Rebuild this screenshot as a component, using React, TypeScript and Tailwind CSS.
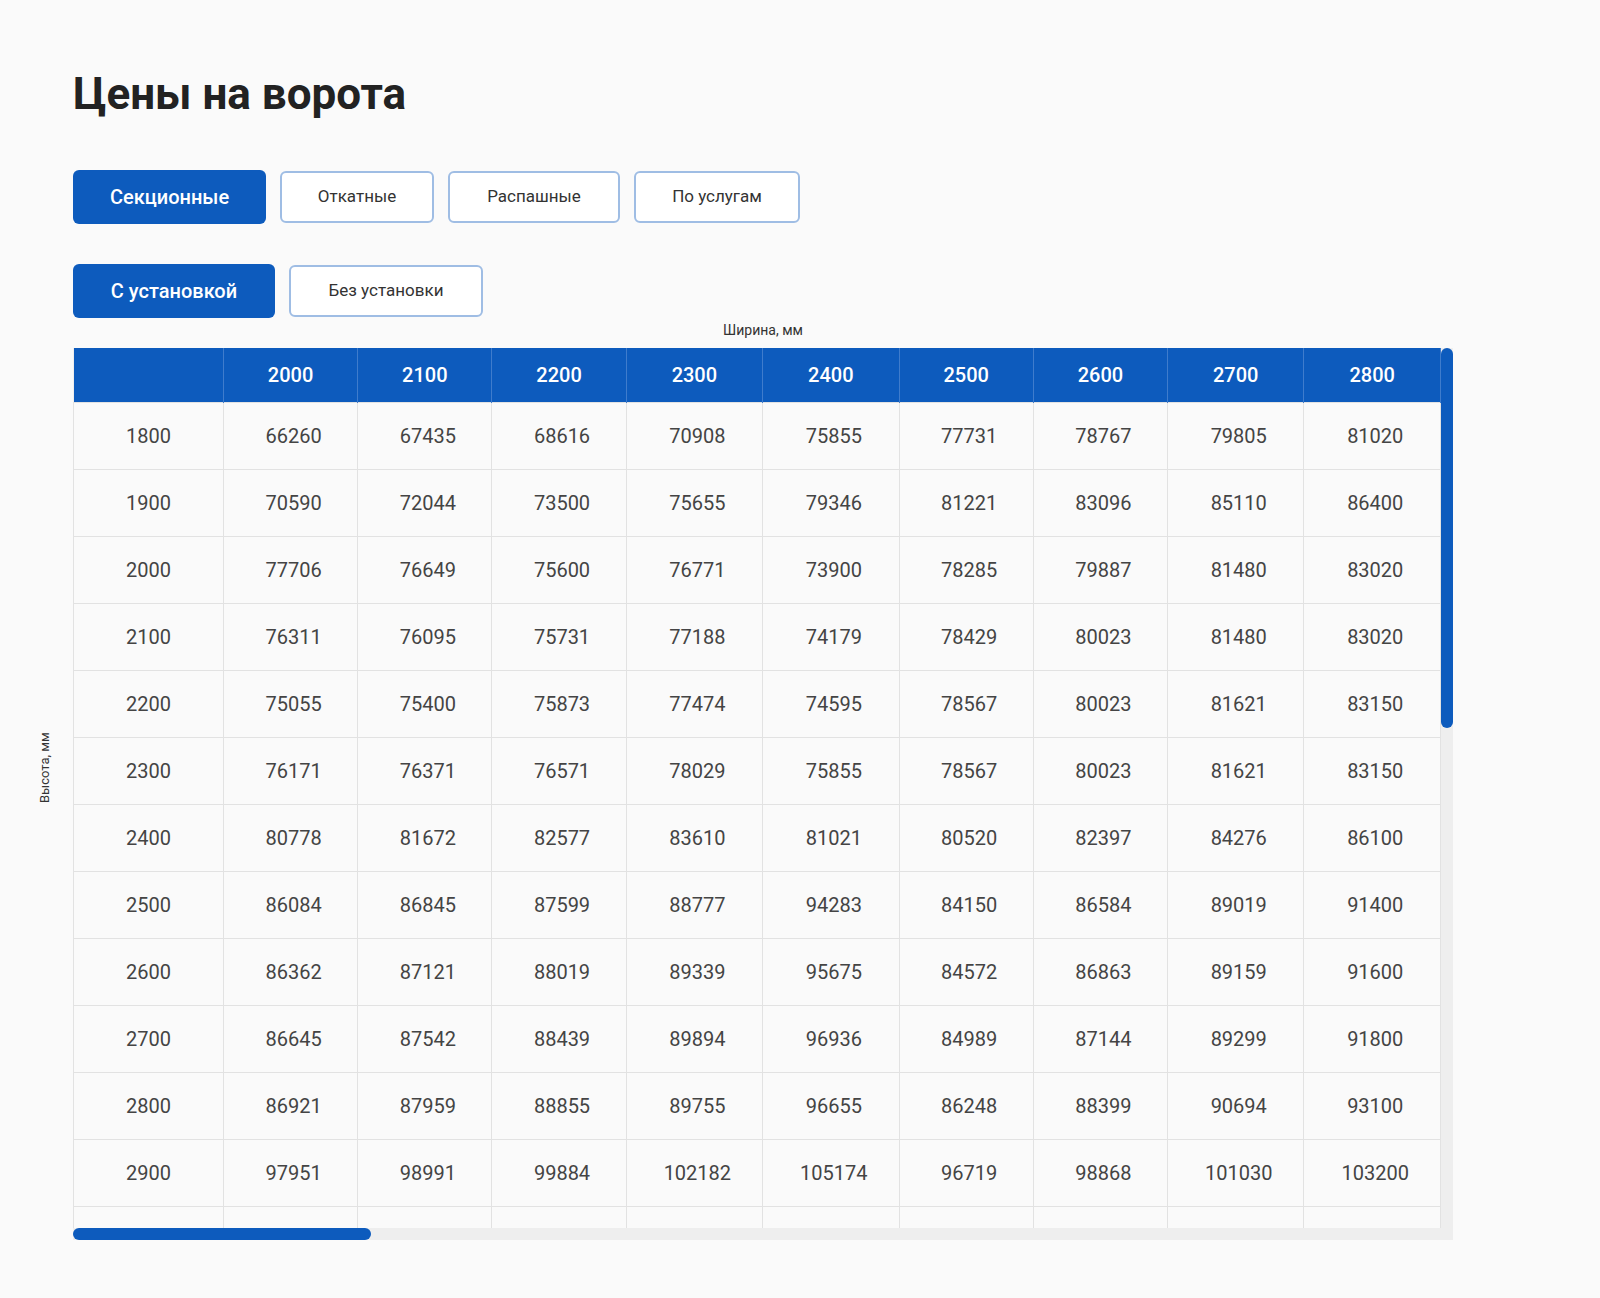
const widths = [2000, 2100, 2200, 2300, 2400, 2500, 2600, 2700, 2800];

const rows: [number, (number | string)[]][] = [
  [1800, [66260, 67435, 68616, 70908, 75855, 77731, 78767, 79805, 81020]],
  [1900, [70590, 72044, 73500, 75655, 79346, 81221, 83096, 85110, 86400]],
  [2000, [77706, 76649, 75600, 76771, 73900, 78285, 79887, 81480, 83020]],
  [2100, [76311, 76095, 75731, 77188, 74179, 78429, 80023, 81480, 83020]],
  [2200, [75055, 75400, 75873, 77474, 74595, 78567, 80023, 81621, 83150]],
  [2300, [76171, 76371, 76571, 78029, 75855, 78567, 80023, 81621, 83150]],
  [2400, [80778, 81672, 82577, 83610, 81021, 80520, 82397, 84276, 86100]],
  [2500, [86084, 86845, 87599, 88777, 94283, 84150, 86584, 89019, 91400]],
  [2600, [86362, 87121, 88019, 89339, 95675, 84572, 86863, 89159, 91600]],
  [2700, [86645, 87542, 88439, 89894, 96936, 84989, 87144, 89299, 91800]],
  [2800, [86921, 87959, 88855, 89755, 96655, 86248, 88399, 90694, 93100]],
  [2900, [97951, 98991, 99884, 102182, 105174, 96719, 98868, 101030, 103200]],
  ["", ["", "", "", "", "", "", "", "", ""]],
];

function Tab({ label, active, w }: { label: string; active?: boolean; w: string }) {
  return (
    <button
      type="button"
      className={
        active
          ? `${w} h-[54px] rounded-md bg-[#0d5bbd] text-[20px] font-medium text-white`
          : `${w} h-[52px] rounded-md border-2 border-[#9fbde4] bg-white text-[17px] text-[#333]`
      }
    >
      {label}
    </button>
  );
}

export default function App() {
  return (
    <div className="min-h-[1298px] bg-[#fafafa] pl-[73px] pt-[72px]" style={{ fontFamily: "Roboto, 'Noto Sans', sans-serif" }}>
      <h1 className="text-[44px] font-bold leading-none text-[#222]">Цены на ворота</h1>

      <div className="mt-[54px] flex items-center gap-[14px]">
        <Tab label="Секционные" active w="w-[193px]" />
        <Tab label="Откатные" w="w-[154px]" />
        <Tab label="Распашные" w="w-[172px]" />
        <Tab label="По услугам" w="w-[166px]" />
      </div>

      <div className="mt-[40px] flex items-center gap-[14px]">
        <Tab label="С установкой" active w="w-[202px]" />
        <Tab label="Без установки" w="w-[194px]" />
      </div>

      <div className="relative w-[1380px]">
        <div className="h-[30px] pt-[2px] text-center text-[14px] text-[#333]">Ширина, мм</div>
        <div className="absolute left-[-28px] top-[440px] -rotate-90 whitespace-nowrap text-[13px] text-[#333] origin-center -translate-x-1/2">
          Высота, мм
        </div>
        <div className="relative h-[892px] overflow-hidden bg-[#eeeeee]">
          <div className="h-[880px] w-[1368px] overflow-hidden">
            <table className="border-collapse text-[20px] text-[#444]" style={{ tableLayout: "fixed" }}>
              <colgroup>
                <col className="w-[176px]" />
                {widths.map((w) => (
                  <col key={w} className="w-[152px]" />
                ))}
              </colgroup>
              <thead>
                <tr className="h-[54px] bg-[#0d5bbd] font-medium text-white">
                  <th className="border-r border-[#3f7ccc]"></th>
                  {widths.map((w) => (
                    <th key={w} className="border-r border-[#3f7ccc] font-medium">
                      {w}
                    </th>
                  ))}
                </tr>
              </thead>
              <tbody>
                {rows.map(([h, vals], i) => (
                  <tr key={i} className="h-[67px] bg-[#fafafa]">
                    <td className="border border-[#e2e2e2] text-center">{h}</td>
                    {vals.map((v, j) => (
                      <td key={j} className="border border-[#e2e2e2] pl-[6px] text-center">
                        {v}
                      </td>
                    ))}
                  </tr>
                ))}
              </tbody>
            </table>
          </div>
          <div className="absolute right-0 top-0 h-[380px] w-[12px] rounded-full bg-[#0d5bbd]" />
          <div className="absolute bottom-0 left-0 h-[12px] w-[298px] rounded-full bg-[#0d5bbd]" />
        </div>
      </div>
    </div>
  );
}
